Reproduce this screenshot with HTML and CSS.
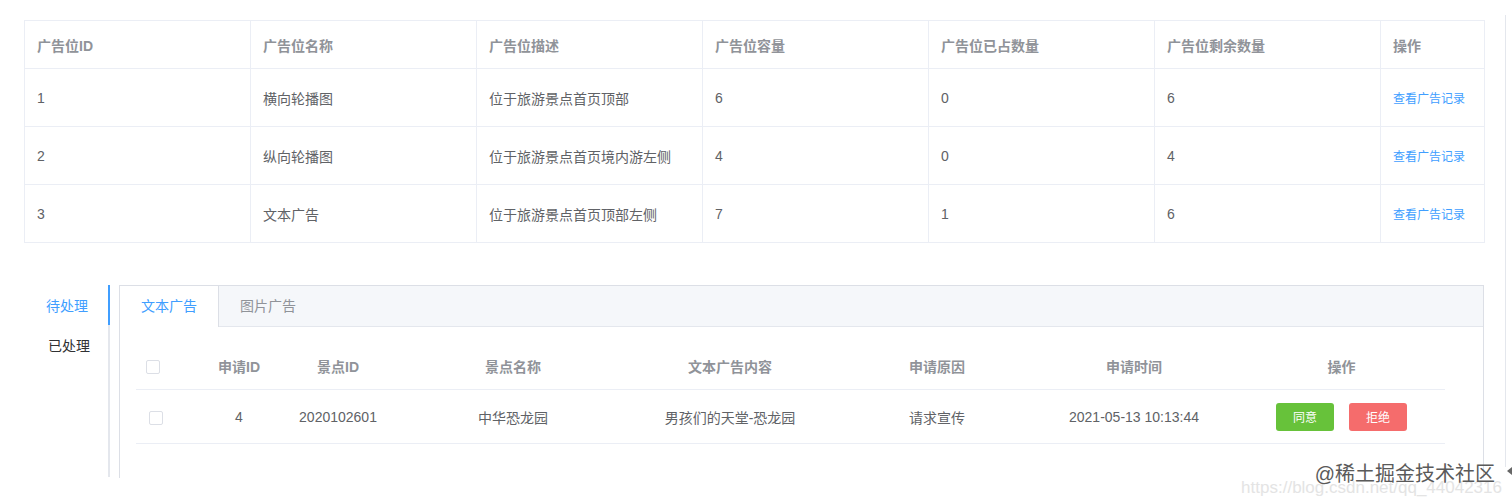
FILE: index.html
```html
<!DOCTYPE html>
<html>
<head>
  <meta charset="utf-8">
  <title>广告位管理</title>
  <link rel="stylesheet" href="styles.css">
</head>
<body>
<div class="page">
  <div class="main">
    <table class="slot-table">
      <colgroup>
        <col class="c-wide"><col class="c-wide"><col class="c-wide"><col class="c-wide"><col class="c-wide"><col class="c-wide"><col class="c-op">
      </colgroup>
      <thead>
        <tr>
          <th>广告位ID</th><th>广告位名称</th><th>广告位描述</th><th>广告位容量</th><th>广告位已占数量</th><th>广告位剩余数量</th><th>操作</th>
        </tr>
      </thead>
      <tbody>
        <tr>
          <td>1</td><td>横向轮播图</td><td>位于旅游景点首页顶部</td><td>6</td><td>0</td><td>6</td><td><a class="link">查看广告记录</a></td>
        </tr>
        <tr>
          <td>2</td><td>纵向轮播图</td><td>位于旅游景点首页境内游左侧</td><td>4</td><td>0</td><td>4</td><td><a class="link">查看广告记录</a></td>
        </tr>
        <tr>
          <td>3</td><td>文本广告</td><td>位于旅游景点首页顶部左侧</td><td>7</td><td>1</td><td>6</td><td><a class="link">查看广告记录</a></td>
        </tr>
      </tbody>
    </table>

    <div class="review">
      <div class="side-tabs">
        <div class="side-tab active">待处理</div>
        <div class="side-tab">已处理</div>
      </div>
      <div class="card">
        <div class="card-tabs">
          <div class="card-tab active">文本广告</div>
          <div class="card-tab">图片广告</div>
        </div>
        <div class="card-body">
          <table class="apply-table">
            <colgroup>
              <col style="width:64px"><col style="width:78px"><col style="width:120px"><col style="width:230px"><col style="width:204px"><col style="width:210px"><col style="width:184px"><col style="width:219px">
            </colgroup>
            <thead>
              <tr>
                <th class="chk"><span class="box head-box"></span></th>
                <th>申请ID</th><th>景点ID</th><th>景点名称</th><th>文本广告内容</th><th>申请原因</th><th>申请时间</th><th class="ops">操作</th>
              </tr>
            </thead>
            <tbody>
              <tr>
                <td class="chk"><span class="box row-box"></span></td>
                <td>4</td><td>2020102601</td><td>中华恐龙园</td><td>男孩们的天堂-恐龙园</td><td>请求宣传</td><td>2021-05-13 10:13:44</td>
                <td class="ops"><button class="btn ok">同意</button><button class="btn no">拒绝</button></td>
              </tr>
            </tbody>
          </table>
        </div>
      </div>
    </div>
  </div>
  <div class="rail"><span class="rail-arrow"></span></div>

  <div class="mark">
    <span class="mark-url">https://blog.csdn.net/qq_44042316</span>
    <span class="mark-name">@稀土掘金技术社区</span>
  </div>
</div>
</body>
</html>
```

FILE: styles.css
```css
body { margin: 0; background: #fff; font-family: "Liberation Sans", "Noto Sans CJK SC", sans-serif; font-size: 14px; color: #606266; }
.page { display: flex; position: relative; height: 502px; overflow: hidden; }
.main { width: 1481px; padding: 20px 0 0 24px; }
.rail { width: 6px; margin-top: 15px; height: 452px; border-left: 1px solid #e4e7ed; position: relative; }
.rail-arrow {
  position: absolute; left: 1px; bottom: -8px;
  border-top: 4px solid transparent; border-bottom: 4px solid transparent; border-right: 5px solid #666;
}

/* top table */
.slot-table { width: 1460px; table-layout: fixed; border-collapse: collapse; border: 1px solid #ebeef5; }
.c-wide { width: 226px; }
.c-op { width: 104px; }
.slot-table th, .slot-table td { border: 1px solid #ebeef5; text-align: left; padding: 0 12px; }
.slot-table th { height: 47px; color: #909399; font-weight: bold; }
.slot-table td { height: 57px; }
.link { color: #409eff; font-size: 12px; cursor: pointer; }

/* review block */
.review { display: flex; margin-top: 42px; }
.side-tabs { width: 84px; height: 192px; border-right: 2px solid #e4e7ed; margin-right: 9px; }
.side-tab { height: 40px; line-height: 42px; text-align: right; padding-right: 20px; color: #303133; margin-right: -2px; }
.side-tab.active { color: #409eff; border-right: 2px solid #409eff; }

.card { width: 1363px; height: 192px; border: 1px solid #dcdfe6; border-bottom: none; }
.card-tabs { display: flex; height: 40px; background: #f5f7fa; border-bottom: 1px solid #e4e7ed; }
.card-tab { line-height: 40px; padding: 0 21px; color: #909399; border-right: 1px solid transparent; }
.card-tab.active { background: #fff; color: #409eff; border-right-color: #dcdfe6; height: 41px; }
.card-body { padding: 15px 0 0 16px; }

.apply-table { width: 1309px; table-layout: fixed; border-collapse: collapse; }
.apply-table th, .apply-table td { text-align: center; padding: 0; border-bottom: 1px solid #ebeef5; }
.apply-table th { height: 47px; color: #909399; font-weight: bold; }
.apply-table td { height: 53px; }
.apply-table .chk { text-align: left; padding-left: 10px; }
.apply-table .ops { padding-left: 12px; }
.box { display: inline-block; width: 12px; height: 12px; border: 1px solid #dcdfe6; border-radius: 2px; vertical-align: middle; }
.row-box { margin-left: 3px; }

.btn { width: 58px; height: 28px; border: none; border-radius: 3px; color: #fff; font-size: 12px; font-family: inherit; vertical-align: middle; }
.btn.ok { background: #67c23a; }
.btn.no { background: #f56c6c; margin-left: 15px; }

/* watermark */
.mark { position: absolute; right: 10px; top: 458px; width: 260px; height: 42px; }
.mark-url { position: absolute; right: 0; top: 20px; font-size: 17px; color: #e4e4e4; white-space: nowrap; }
.mark-name { position: absolute; right: 7px; top: 0; font-size: 20px; color: #5a5a5a; white-space: nowrap; }
```
